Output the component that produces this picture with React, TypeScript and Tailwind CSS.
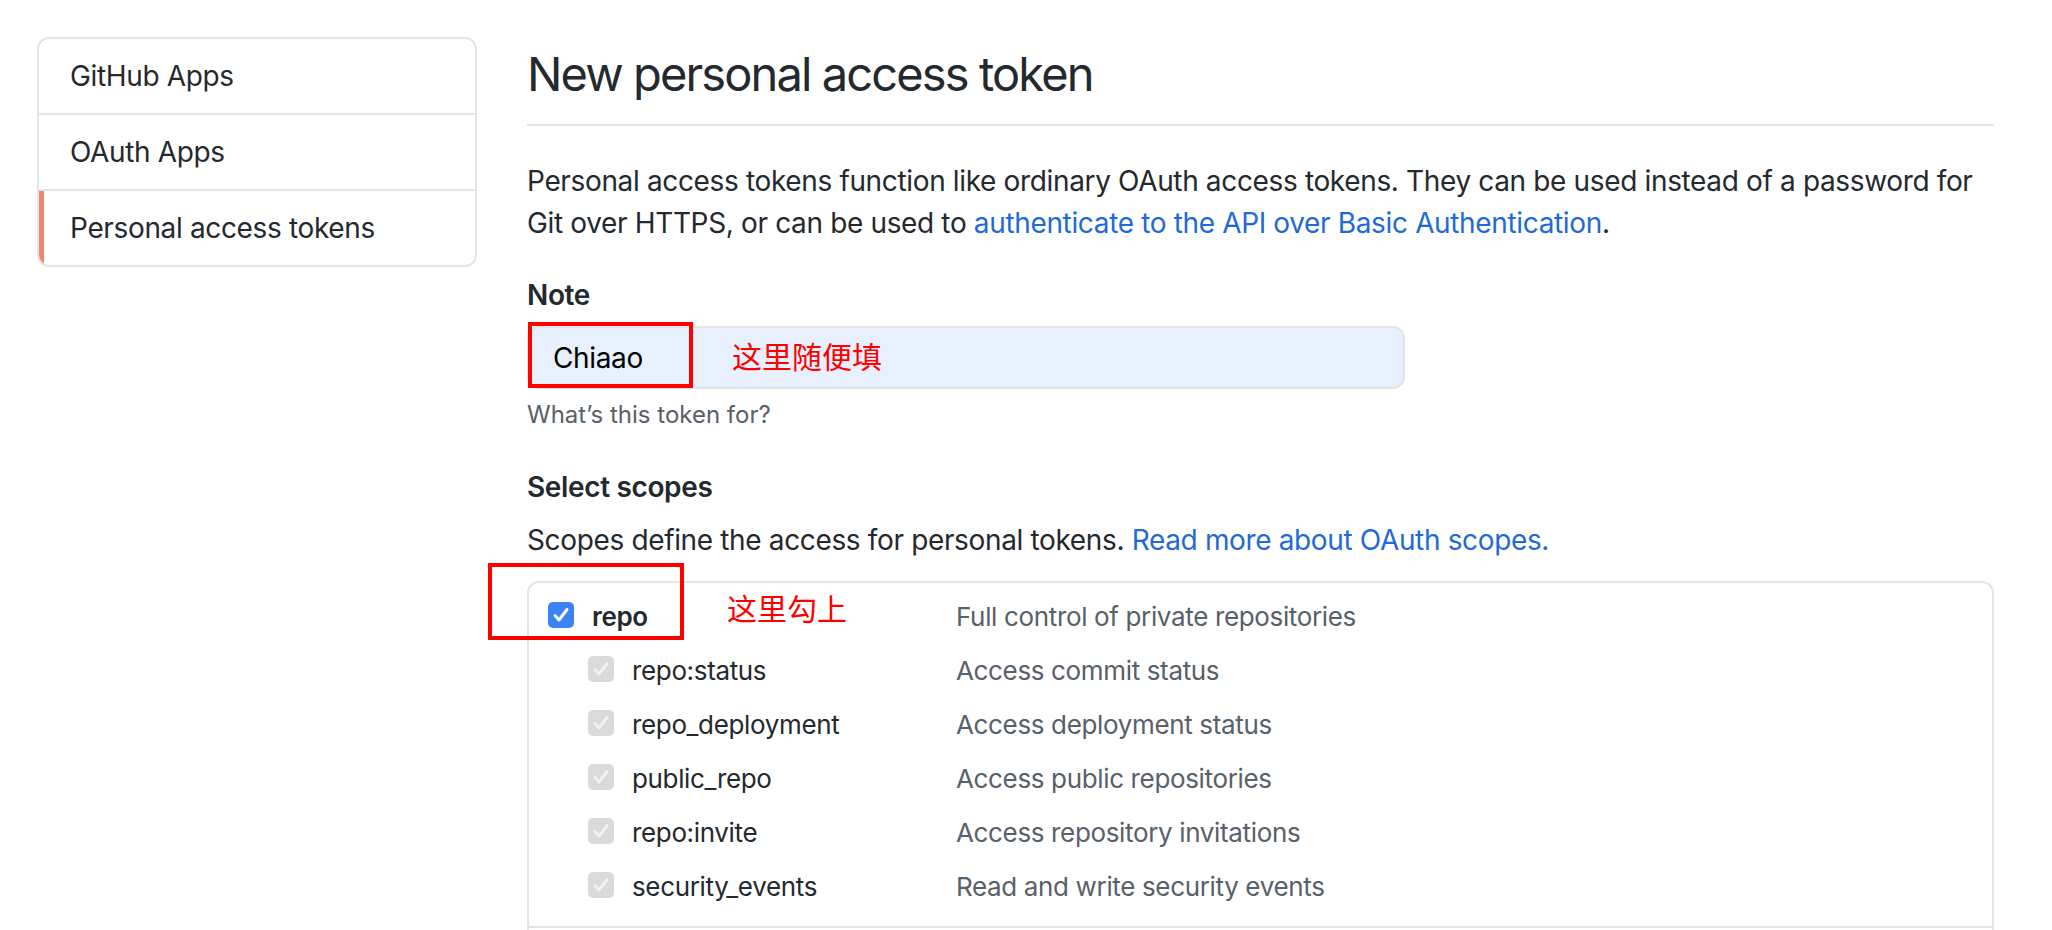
import React from "react";

interface NavItem {
  id: string;
  title: string;
  active?: boolean;
}

interface Scope {
  name: string;
  desc: string;
}

const navItems: NavItem[] = [
  { id: "github-apps", title: "GitHub Apps" },
  { id: "oauth-apps", title: "OAuth Apps" },
  { id: "tokens", title: "Personal access tokens", active: true },
];

const repoScopes: Scope[] = [
  { name: "repo:status", desc: "Access commit status" },
  { name: "repo_deployment", desc: "Access deployment status" },
  { name: "public_repo", desc: "Access public repositories" },
  { name: "repo:invite", desc: "Access repository invitations" },
  { name: "security_events", desc: "Read and write security events" },
];

const Check: React.FC<{ disabled?: boolean }> = ({ disabled }) => (
  <span
    className={`flex h-[26px] w-[26px] shrink-0 items-center justify-center rounded-[5px] ${
      disabled ? "bg-[#dadada] text-[#f1f1f1]" : "bg-[#3b82f6] text-white"
    }`}
  >
    <svg viewBox="0 0 26 26" className="h-[26px] w-[26px]" fill="none">
      <path
        d="M7 13.5l4 4.5 8-10.5"
        stroke="currentColor"
        strokeWidth={3}
        strokeLinecap="round"
        strokeLinejoin="round"
      />
    </svg>
  </span>
);

const App: React.FC = () => {
  return (
    <div className="h-[930px] overflow-hidden bg-white text-[#24292e] tracking-[-0.022em] font-[family-name:Inter,'Noto_Sans_CJK_SC',sans-serif]">
      <div className="flex">
        {/* sidebar */}
        <nav className="ml-[37px] mt-[37px] w-[440px] shrink-0 self-start overflow-hidden rounded-[12px] border-2 border-[#e1e4e8]">
          {navItems.map((nav, i) => (
            <div
              key={nav.id}
              className={`relative px-[31px] py-[16px] text-[28px] leading-[42px] ${
                i > 0 ? "border-t-2 border-[#e1e4e8]" : ""
              }`}
            >
              {nav.active && (
                <span className="absolute bottom-0 left-0 top-0 w-[5px] bg-[#f0866f]" />
              )}
              {nav.title}
            </div>
          ))}
        </nav>

        {/* main */}
        <main className="ml-[50px] w-[1467px] pt-[44px]">
          <h1 className="border-b-2 border-[#e1e4e8] pb-[20px] text-[47px] font-normal leading-[60px] tracking-[-0.04em]">
            New personal access token
          </h1>

          <p className="mt-[34px] whitespace-nowrap text-[28px] leading-[42px]">
            Personal access tokens function like ordinary OAuth access tokens. They can be used instead of a password for
            <br />
            Git over HTTPS, or can be used to{" "}
            <a className="text-[#1f6ad6]">authenticate to the API over Basic Authentication</a>.
          </p>

          <div className="mt-[30px] text-[28px] font-semibold leading-[42px]">Note</div>
          <div className="relative mt-[10px] flex h-[63px] w-[878px] items-center rounded-[12px] border-2 border-[#e1e4e8] bg-[#e8f0fe] pl-[24px] text-[28px] text-black">
            Chiaao
            <span className="absolute left-[203px] top-[14px] text-[30px] leading-[30px] tracking-normal text-[#ff0000]">
              这里随便填
            </span>
            <span className="absolute -left-[1px] -top-[6px] h-[66px] w-[165px] border-4 border-[#ff0000]" />
          </div>
          <p className="mt-[8px] text-[24px] leading-[36px] tracking-normal text-[#586069]">What’s this token for?</p>

          <div className="mt-[33px] text-[28px] font-semibold leading-[42px]">Select scopes</div>
          <p className="mt-[11px] text-[28px] leading-[42px]">
            Scopes define the access for personal tokens.{" "}
            <a className="text-[#1f6ad6]">Read more about OAuth scopes.</a>
          </p>

          <div className="relative mt-[20px] h-[400px] rounded-t-[12px] border-2 border-b-0 border-[#e1e4e8]">
            <div className="border-b-2 border-[#e1e4e8] px-[19px] pb-[14px] pt-[5px] text-[26px] leading-[42px]">
              <div className="flex h-[54px] items-center">
                <div className="flex w-[408px] items-center">
                  <Check />
                  <span className="ml-[18px] mt-[4px] font-semibold">repo</span>
                </div>
                <span className="mt-[4px] text-[#586069]">Full control of private repositories</span>
              </div>
              {repoScopes.map((s) => (
                <div key={s.name} className="flex h-[54px] items-center">
                  <div className="flex w-[408px] items-center pl-[40px]">
                    <Check disabled />
                    <span className="ml-[18px] mt-[4px]">{s.name}</span>
                  </div>
                  <span className="mt-[4px] text-[#586069]">{s.desc}</span>
                </div>
              ))}
            </div>

            {/* annotations */}
            <span className="absolute left-[198px] top-[11px] text-[30px] leading-[30px] tracking-normal text-[#ff0000]">
              这里勾上
            </span>
            <span className="absolute -left-[41px] -top-[20px] h-[77px] w-[196px] border-4 border-[#ff0000]" />
          </div>
        </main>
      </div>
    </div>
  );
};

export default App;
